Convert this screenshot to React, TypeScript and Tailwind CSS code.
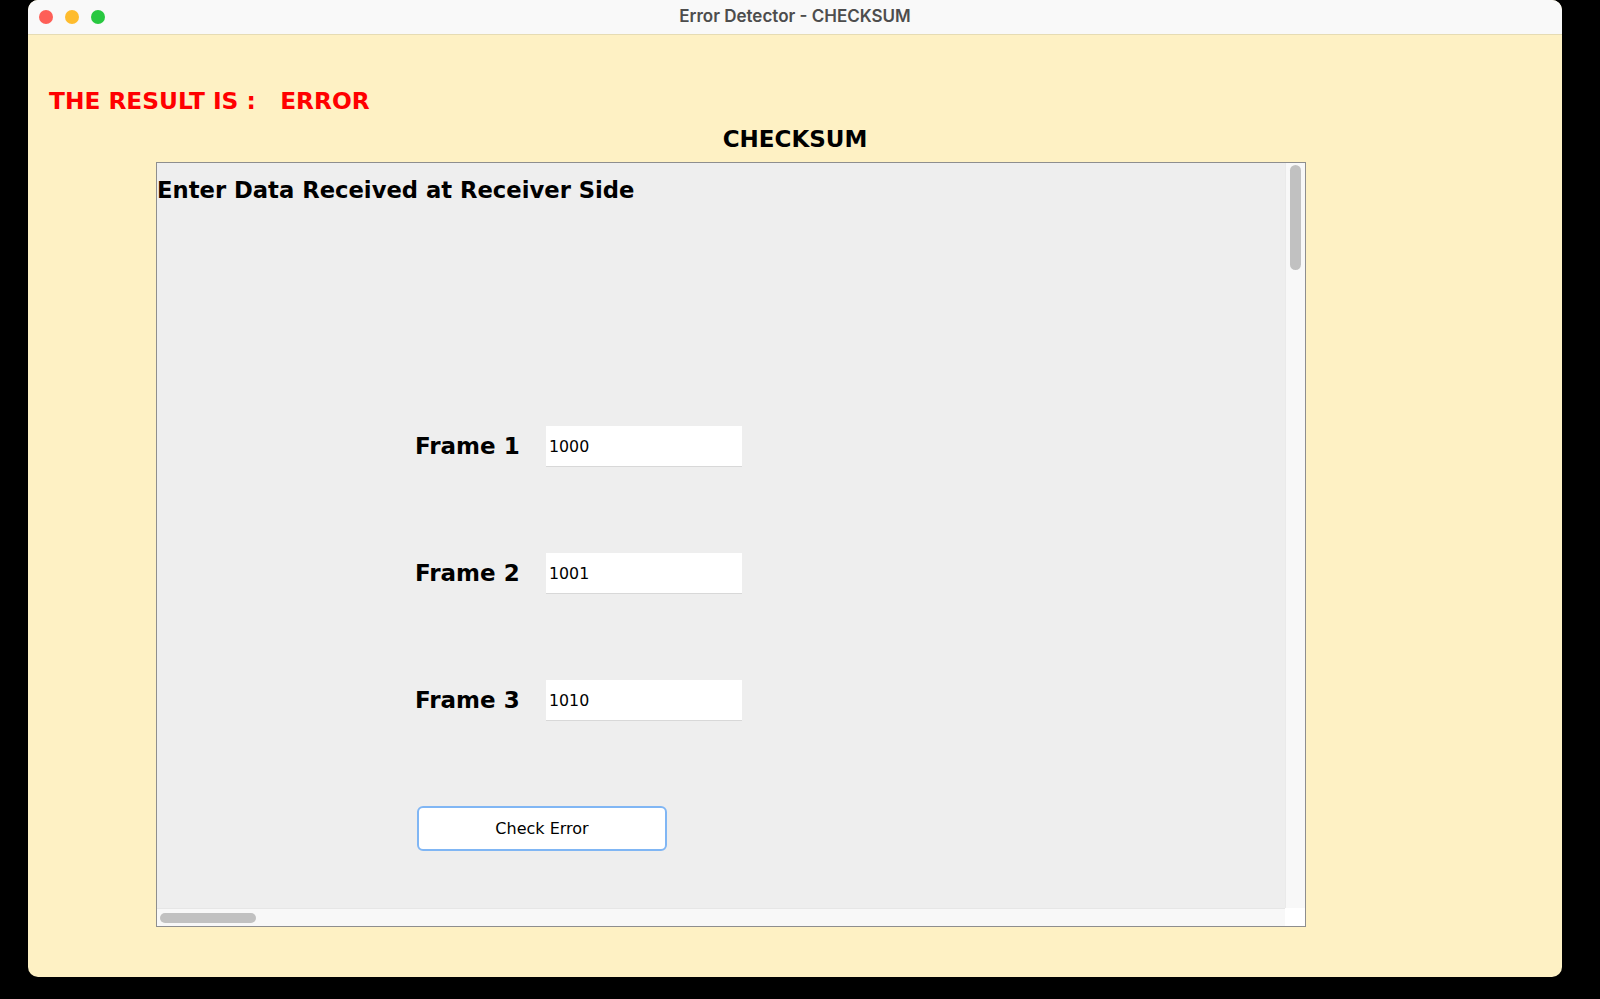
import React from "react";

const tahoma = { fontFamily: "'DejaVu Sans', 'Liberation Sans', sans-serif" };

function FrameRow({ label, value }: { label: string; value: string }) {
  return (
    <div className="flex h-[41px] items-center">
      <span className="w-[131px] text-[23px] font-bold text-black">{label}</span>
      <input
        readOnly
        value={value}
        className="h-[41px] w-[196px] border-b border-[#d8d8d8] bg-white pl-[3px] text-[15.8px] text-black outline-none"
      />
    </div>
  );
}

export default function App() {
  return (
    <div className="h-[999px] w-[1600px] bg-black pl-[28px]" style={tahoma}>
      <div className="flex h-[977px] w-[1534px] flex-col overflow-hidden rounded-[10px] bg-[#fef1c4]">
        <div className="relative flex h-[35px] shrink-0 items-center justify-center border-b border-[#e6dcb4] bg-[#f9f9f9]">
          <div className="absolute left-[11px] top-[10px] flex gap-[12px]">
            <span className="h-[14px] w-[14px] rounded-full bg-[#fe5f57]" />
            <span className="h-[14px] w-[14px] rounded-full bg-[#febc2e]" />
            <span className="h-[14px] w-[14px] rounded-full bg-[#28c840]" />
          </div>
          <span
            className="text-[17px] font-semibold text-[#4d4d4d]"
            style={{ fontFamily: "Inter, 'Liberation Sans', sans-serif" }}
          >
            Error Detector - CHECKSUM
          </span>
        </div>

        <div className="flex flex-1 flex-col">
          <div className="mt-[51px] pl-[21px] text-[23.3px] font-bold leading-[30px] text-[#ff0000] whitespace-pre">
            {"THE RESULT IS :   ERROR"}
          </div>
          <div className="mt-[9px] text-center text-[23px] font-bold leading-[28px] text-black">
            CHECKSUM
          </div>
          <div className="ml-[128px] mt-[9px] flex h-[765px] w-[1150px] flex-col border border-[#8e8e8e] bg-[#eeeeee]">
            <div className="flex min-h-0 flex-1">
              <div className="flex flex-1 flex-col">
                <div className="pt-[14px] text-[22.7px] font-bold leading-[26px] text-black">
                  Enter Data Received at Receiver Side
                </div>
                <div className="ml-[258px] mt-[223px] flex flex-col gap-[86px]">
                  <FrameRow label="Frame 1" value="1000" />
                  <FrameRow label="Frame 2" value="1001" />
                  <FrameRow label="Frame 3" value="1010" />
                </div>
                <button
                  type="button"
                  className="ml-[260px] mt-[85px] h-[45px] w-[250px] rounded-[6px] border-2 border-[#80b6f4] bg-white text-[16px] text-black"
                >
                  Check Error
                </button>
              </div>
              <div className="flex w-[20px] shrink-0 justify-center border-l border-[#eaeaea] bg-[#f8f8f8] pt-[2px]">
                <div className="h-[105px] w-[11px] rounded-full bg-[#c1c1c1]" />
              </div>
            </div>
            <div className="flex h-[18px] shrink-0">
              <div className="flex flex-1 items-center border-t border-[#e6e6e6] bg-[#f8f8f8] pl-[3px]">
                <div className="h-[10px] w-[96px] rounded-full bg-[#c1c1c1]" />
              </div>
              <div className="w-[20px] bg-white" />
            </div>
          </div>
        </div>
      </div>
    </div>
  );
}
